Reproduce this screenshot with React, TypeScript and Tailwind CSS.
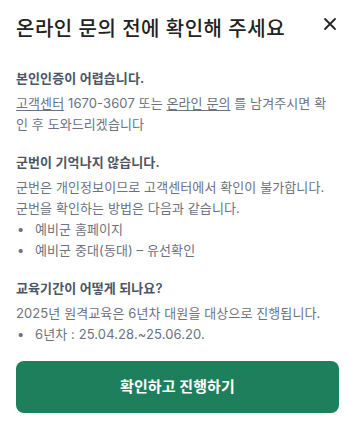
import React from "react";

const Bullet: React.FC<{ children: React.ReactNode }> = ({ children }) => (
  <li className="flex">
    <span className="w-[19px] shrink-0 pl-[1px]">•</span>
    <span>{children}</span>
  </li>
);

export default function App() {
  return (
    <div
      className="w-[355px] h-[424px] bg-white px-4 text-[#6b7280] tracking-[0.1px]"
      style={{ fontFamily: '"Inter", "Noto Sans CJK KR", sans-serif' }}
    >
      {/* Header */}
      <div className="flex items-start justify-between pt-[16px]">
        <h1 className="text-[20px] leading-[26px] font-medium text-[#222] tracking-[0.5px]">
          온라인 문의 전에 확인해 주세요
        </h1>
        <button className="mt-[1px] mr-[2px] text-[#222]">
          <svg width="14" height="14" viewBox="0 0 14 14" fill="none">
            <path d="M2 2L12 12M12 2L2 12" stroke="currentColor" strokeWidth="1.8" strokeLinecap="round" />
          </svg>
        </button>
      </div>

      {/* Section 1 */}
      <section className="mt-[26px]">
        <h2 className="text-[13px] leading-[20px] font-semibold text-[#4b5563]">본인인증이 어렵습니다.</h2>
        <p className="mt-[5px] pr-[8px] text-[13px] leading-[21px]">
          <span className="underline underline-offset-2">고객센터</span> 1670-3607 또는{" "}
          <span className="underline underline-offset-2">온라인 문의</span> 를 남겨주시면 확인 후 도와드리겠습니다
        </p>
      </section>

      {/* Section 2 */}
      <section className="mt-[17px]">
        <h2 className="text-[13px] leading-[20px] font-semibold text-[#4b5563]">군번이 기억나지 않습니다.</h2>
        <p className="mt-[5px] text-[13px] leading-[21px]">
          군번은 개인정보이므로 고객센터에서 확인이 불가합니다.
          <br />
          군번을 확인하는 방법은 다음과 같습니다.
        </p>
        <ul className="text-[13px] leading-[21px]">
          <Bullet>예비군 홈페이지</Bullet>
          <Bullet>예비군 중대(동대) – 유선확인</Bullet>
        </ul>
      </section>

      {/* Section 3 */}
      <section className="mt-[17px]">
        <h2 className="text-[13px] leading-[20px] font-semibold text-[#4b5563]">교육기간이 어떻게 되나요?</h2>
        <p className="mt-[5px] text-[13px] leading-[21px]">
          2025년 원격교육은 6년차 대원을 대상으로 진행됩니다.
        </p>
        <ul className="text-[13px] leading-[21px]">
          <Bullet>6년차 : 25.04.28.~25.06.20.</Bullet>
        </ul>
      </section>

      <button className="mt-[16px] w-full h-[52px] rounded-[8px] bg-[#1e7f5c] text-white text-[15px] font-bold">
        확인하고 진행하기
      </button>
    </div>
  );
}
